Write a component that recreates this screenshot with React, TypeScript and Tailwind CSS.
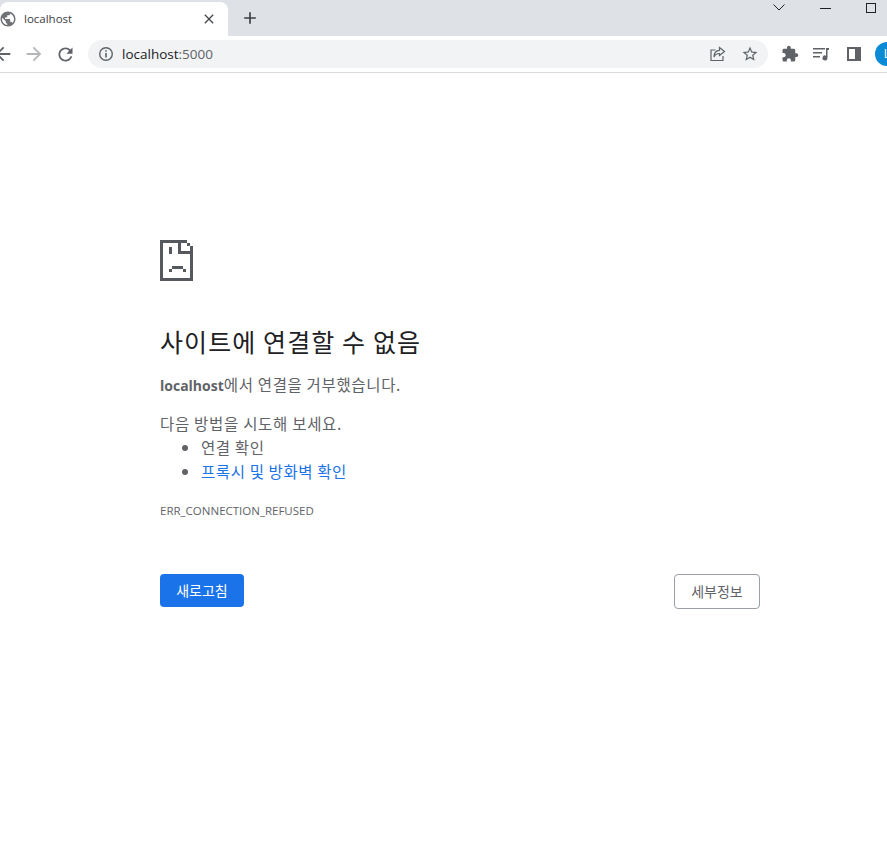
const latin = "font-['Open_Sans','Noto_Sans_CJK_KR',sans-serif]";

const SadFile = () => (
  <svg width="33" height="41" viewBox="0 0 33 41" shapeRendering="crispEdges" fill="#55585c">
    <path d="M0 0h27v3h-24v35h27v-27h3v30h-33z" />
    <path d="M18 0h3v11h12v3h-15z" />
    <path d="M27 3h3v3h-3zM30 6h3v5h-3z" />
    <path d="M9 7h3v7h-3z" />
    <path d="M12 26h11v3h-11zM9 29h3v3h-3zM23 29h3v3h-3z" />
  </svg>
);

const Mat = ({ d, size, fill }: any) => (
  <svg width={size} height={size} viewBox="0 0 24 24" fill={fill} className="shrink-0">
    <path d={d} />
  </svg>
);

const ShareIcon = () => (
  <svg width="16" height="16" viewBox="0 0 16 16" fill="none" stroke="#5f6368" strokeWidth="1.2" className="shrink-0">
    <path d="M5.5 4H1v10.5h12V10" />
    <path d="M9.5 1.5l5 4-5 4V7.5C7 7.5 5 8.5 4 11c0-4 2-6.5 5.5-6.7z" />
  </svg>
);

const MediaIcon = () => (
  <svg width="16" height="14" viewBox="0 0 16 14" fill="#5f6368" className="shrink-0">
    <path d="M0 1h12v1.5H0zM0 5h9v1.5H0zM0 9h7v1.5H0z" />
    <path d="M13 1h3v2h-1.5v8a2.5 2.5 0 1 1-1.5-2.3z" />
  </svg>
);

const PanelIcon = () => (
  <svg width="14" height="14" viewBox="0 0 14 14" fill="#5f6368" className="shrink-0">
    <path fillRule="evenodd" d="M0 0h14v14H0zM2 2v10h6V2z" />
  </svg>
);

const InfoIcon = () => (
  <svg width="16" height="16" viewBox="0 0 16 16" fill="none" stroke="#5f6368" className="shrink-0">
    <circle cx="8" cy="8" r="6.3" strokeWidth="1.4" />
    <path d="M8 7v4.5M8 4.2v1.6" strokeWidth="1.6" />
  </svg>
);

export default function App() {
  return (
    <div className={`w-[887px] h-[852px] overflow-hidden bg-white ${latin}`}>
      <div className="h-[36px] bg-[#dee1e6] flex items-end relative">
        <div className="w-[228px] h-[34px] bg-white rounded-t-[8px] flex items-center pr-[11px]">
          <span className="ml-[-1px]">
            <Mat size={18} fill="#6f7276" d="M12 2C6.48 2 2 6.48 2 12s4.48 10 10 10 10-4.48 10-10S17.52 2 12 2zm-1 17.93c-3.95-.49-7-3.85-7-7.93 0-.62.08-1.21.21-1.79L9 15v1c0 1.1.9 2 2 2v1.93zm6.9-2.54c-.26-.81-1-1.39-1.9-1.39h-1v-3c0-.55-.45-1-1-1H8v-2h2c.55 0 1-.45 1-1V7h2c1.1 0 2-.9 2-2v-.41c2.93 1.19 5 4.06 5 7.41 0 2.08-.8 3.97-2.1 5.39z" />
          </span>
          <span className="ml-[7px] text-[11.5px] text-[#3c4043]">localhost</span>
          <span className="ml-auto">
            <Mat size={16} fill="#45484c" d="M19 6.41 17.59 5 12 10.59 6.41 5 5 6.41 10.59 12 5 17.59 6.41 19 12 13.41 17.59 19 19 17.59 13.41 12z" />
          </span>
        </div>
        <span className="ml-[12px] mb-[8px]">
          <Mat size={20} fill="#3c4043" d="M19 13h-6v6h-2v-6H5v-2h6V5h2v6h6v2z" />
        </span>
        <svg width="12" height="7" viewBox="0 0 12 7" fill="none" stroke="#202124" className="absolute left-[773px] top-[4px]">
          <path d="M.5.5 6 6 11.5.5" />
        </svg>
        <div className="absolute left-[820px] top-[8px] w-[11px] h-[1px] bg-[#202124]" />
        <div className="absolute left-[866px] top-[3px] w-[10px] h-[10px] border border-[#202124]" />
      </div>
      <div className="h-[37px] border-b border-[#dadce0] flex items-center relative">
        <span className="ml-[-8px]">
          <Mat size={22} fill="#5f6368" d="M20 11H7.83l5.59-5.59L12 4l-8 8 8 8 1.41-1.41L7.83 13H20v-2z" />
        </span>
        <span className="ml-[9px]">
          <Mat size={22} fill="#b4b6b9" d="M12 4l-1.41 1.41L16.17 11H4v2h12.17l-5.58 5.59L12 20l8-8z" />
        </span>
        <span className="ml-[10px]">
          <Mat size={21} fill="#5f6368" d="M17.65 6.35C16.2 4.9 14.21 4 12 4c-4.42 0-7.99 3.58-7.99 8s3.57 8 7.99 8c3.73 0 6.84-2.55 7.73-6h-2.08c-.82 2.33-3.04 4-5.65 4-3.31 0-6-2.69-6-6s2.69-6 6-6c1.66 0 3.14.69 4.22 1.78L13 11h7V4l-2.35 2.35z" />
        </span>
        <div className="ml-[12px] w-[680px] h-[28px] shrink-0 rounded-full bg-[#f1f3f4] flex items-center pl-[10px] pr-[9px]">
          <InfoIcon />
          <span className="ml-[8px] text-[13.5px] text-[#202124]">
            localhost<span className="text-[#5f6368]">:5000</span>
          </span>
          <span className="ml-auto mr-[15px]"><ShareIcon /></span>
          <Mat size={18} fill="#5f6368" d="M22 9.24l-7.19-.62L12 2 9.19 8.63 2 9.24l5.46 4.73L5.82 21 12 17.27 18.18 21l-1.63-7.03L22 9.24zM12 15.4l-3.76 2.27 1-4.28-3.32-2.88 4.38-.38L12 6.1l1.71 4.04 4.38.38-3.32 2.88 1 4.28L12 15.4z" />
        </div>
        <span className="ml-[13px]">
          <Mat size={18} fill="#5f6368" d="M20.5 11H19V7c0-1.1-.9-2-2-2h-4V3.5C13 2.12 11.88 1 10.5 1S8 2.12 8 3.5V5H4c-1.1 0-1.99.9-1.99 2v3.8H3.5c1.49 0 2.7 1.21 2.7 2.7s-1.21 2.7-2.7 2.7H2V20c0 1.1.9 2 2 2h3.8v-1.5c0-1.49 1.21-2.7 2.7-2.7 1.49 0 2.7 1.21 2.7 2.7V22H17c1.1 0 2-.9 2-2v-4h1.5c1.38 0 2.5-1.12 2.5-2.5S21.88 11 20.5 11z" />
        </span>
        <span className="ml-[14px]"><MediaIcon /></span>
        <span className="ml-[18px]"><PanelIcon /></span>
        <div className="ml-[14px] w-[24px] h-[24px] shrink-0 rounded-full bg-[#0b8ad6] text-white text-[12px] flex items-center justify-center">L</div>
      </div>
      <div className="w-[600px] ml-[160px] pt-[167px] font-['Noto_Sans_CJK_KR','Open_Sans',sans-serif]">
        <SadFile />
        <h1 className="mt-[44px] text-[25px] tracking-[1.1px] leading-[32px] text-[#202124] font-normal">사이트에 연결할 수 없음</h1>
        <p className="mt-[15px] text-[15.5px] tracking-[0.65px] leading-[24px] text-[#5f6368]">
          <b className={`font-bold text-[14px] tracking-normal ${latin}`}>localhost</b>에서 연결을 거부했습니다.
        </p>
        <p className="mt-[13px] text-[15.5px] tracking-[0.7px] leading-[24px] text-[#5f6368]">다음 방법을 시도해 보세요.</p>
        <ul className="list-disc pl-[41px] text-[15.5px] tracking-[0.6px] leading-[24px] text-[#5f6368]">
          <li>연결 확인</li>
          <li><span className="text-[#1a73e8]">프록시 및 방화벽 확인</span></li>
        </ul>
        <p className={`mt-[20px] text-[11.5px] leading-[16px] text-[#5f6368] ${latin}`}>ERR_CONNECTION_REFUSED</p>
        <div className="mt-[55px] flex justify-between items-start">
          <button className="w-[84px] h-[33px] rounded-[4px] bg-[#1a73e8] text-white text-[14px]">새로고침</button>
          <button className="w-[86px] h-[35px] rounded-[4px] border border-[#9aa0a6] text-[#5f6368] text-[14px]">세부정보</button>
        </div>
      </div>
    </div>
  );
}
